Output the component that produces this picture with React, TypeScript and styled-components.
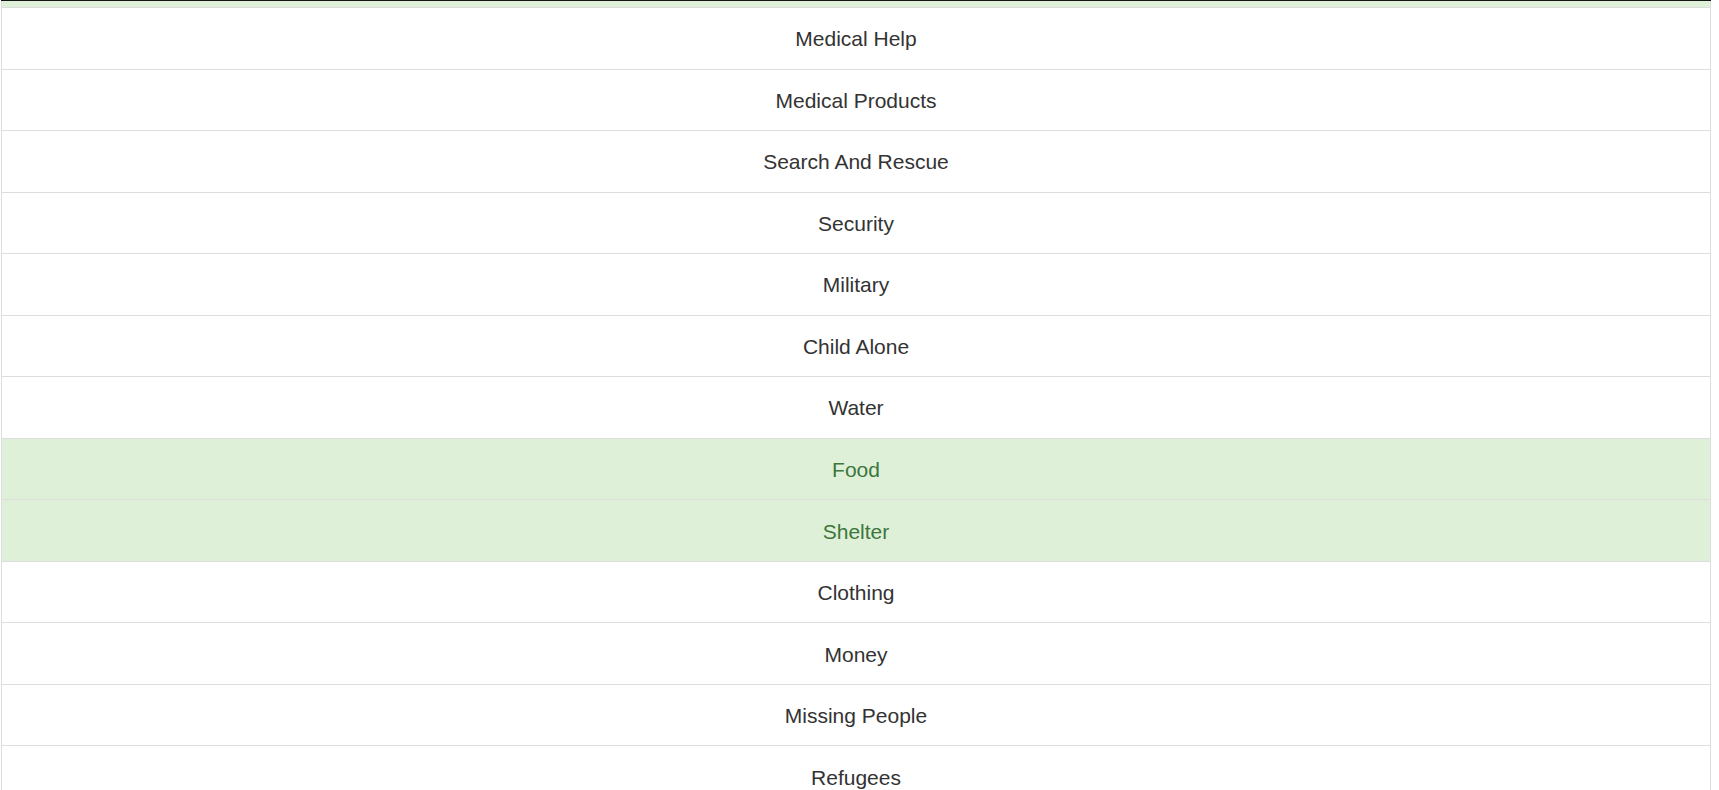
import React from "react";
import styled, { createGlobalStyle } from "styled-components";

const GlobalStyle = createGlobalStyle`
  html, body {
    margin: 0;
    padding: 0;
    background: #ffffff;
    overflow: hidden;
  }
  body {
    font-family: "Liberation Sans", Arial, Helvetica, sans-serif;
    color: #333333;
  }
`;

const Page = styled.div`
  padding-left: 1px;
  width: 1710px;
`;

const Table = styled.table`
  width: 100%;
  border-collapse: collapse;
  border-spacing: 0;
  border-left: 1px solid #dddddd;
  border-right: 1px solid #dddddd;
`;

const PeekRow = styled.tr`
  td {
    height: 6px;
    padding: 0;
    background: #dff0d8;
    border-top: 1px solid #141414;
  }
`;

const Row = styled.tr<{ $success?: boolean }>`
  td {
    padding: 16.28px 8px 14.28px;
    border-top: 1px solid #dddddd;
    text-align: center;
    font-size: 21px;
    line-height: 30px;
    color: ${(p) => (p.$success ? "#3c763d" : "#333333")};
    background: ${(p) => (p.$success ? "#dff0d8" : "#ffffff")};
  }
`;

const categories: { name: string; success?: boolean }[] = [
  { name: "Medical Help" },
  { name: "Medical Products" },
  { name: "Search And Rescue" },
  { name: "Security" },
  { name: "Military" },
  { name: "Child Alone" },
  { name: "Water" },
  { name: "Food", success: true },
  { name: "Shelter", success: true },
  { name: "Clothing" },
  { name: "Money" },
  { name: "Missing People" },
  { name: "Refugees" },
];

export default function App() {
  return (
    <>
      <GlobalStyle />
      <Page>
        <Table>
          <tbody>
            <PeekRow>
              <td />
            </PeekRow>
            {categories.map((c) => (
              <Row key={c.name} $success={c.success}>
                <td>{c.name}</td>
              </Row>
            ))}
          </tbody>
        </Table>
      </Page>
    </>
  );
}
